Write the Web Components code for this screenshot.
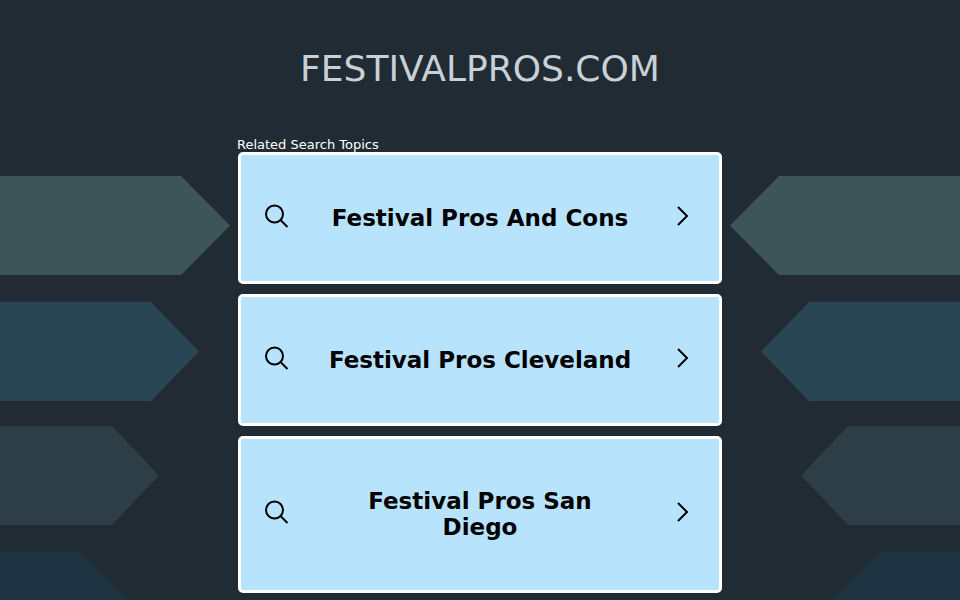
<!DOCTYPE html>
<html>
<head>
<meta charset="utf-8">
<title>festivalpros.com</title>
<style>
    html, body {
        margin: 0;
        height: 100%;
        overflow: hidden;
        background-color: #202b34;
        font-family: "DejaVu Sans", sans-serif;
    }
</style>
</head>
<body>
<arrow-backdrop></arrow-backdrop>
<parked-page domain="FESTIVALPROS.COM" heading="Related Search Topics">
    <search-link>Festival Pros And Cons</search-link>
    <search-link>Festival Pros Cleveland</search-link>
    <search-link>Festival Pros San Diego</search-link>
</parked-page>

<script>
class ArrowBackdrop extends HTMLElement {
    constructor() {
        super();
        this.attachShadow({ mode: 'open' });
    }

    connectedCallback() {
        this.shadowRoot.innerHTML = `
            <style>
                :host {
                    display: block;
                    position: absolute;
                    left: 0;
                    top: 0;
                    width: 960px;
                    height: 600px;
                    overflow: hidden;
                }
                svg {
                    display: block;
                }
            </style>
            <svg width="960" height="600" viewBox="0 0 960 600">
                <path fill="#3e5558" d="M0 176H181L230 225.500L181 275H0Z"/>
                <path fill="#2a4554" d="M0 302H151L199 351.500L151 401H0Z"/>
                <path fill="#2d3e46" d="M0 426H112L159 475.500L112 525H0Z"/>
                <path fill="#1f3442" d="M0 552H80L128 601V651H0Z"/>
                <path fill="#3e5558" d="M960 176H779L730 225.500L779 275H960Z"/>
                <path fill="#2a4554" d="M960 302H809L761 351.500L809 401H960Z"/>
                <path fill="#2d3e46" d="M960 426H848L801 475.500L848 525H960Z"/>
                <path fill="#1f3442" d="M960 552H880L832 601V651H960Z"/>
            </svg>
        `;
    }
}

class ParkedPage extends HTMLElement {
    constructor() {
        super();
        this.attachShadow({ mode: 'open' });
    }

    connectedCallback() {
        const domain = this.getAttribute('domain');
        const heading = this.getAttribute('heading');
        this.shadowRoot.innerHTML = `
            <style>
                :host {
                    display: block;
                    position: relative;
                    width: 960px;
                    height: 600px;
                    overflow: hidden;
                }
                h1 {
                    margin: 0;
                    padding-top: 47px;
                    height: 90px;
                    font-size: 36px;
                    line-height: 43px;
                    font-weight: 400;
                    text-align: center;
                    color: #c9d0d6;
                }
                .topics {
                    width: 486px;
                    margin: 0 auto;
                    box-sizing: border-box;
                }
                h2 {
                    margin: 0;
                    font-size: 13px;
                    line-height: 15px;
                    font-weight: 400;
                    color: #ffffff;
                }
                .list {
                    display: flex;
                    flex-direction: column;
                    gap: 10px;
                    width: 484px;
                    margin-left: 1px;
                }
            </style>
            <h1>${domain}</h1>
            <div class="topics">
                <h2>${heading}</h2>
                <div class="list"><slot></slot></div>
            </div>
        `;
    }
}

class SearchLink extends HTMLElement {
    constructor() {
        super();
        this.attachShadow({ mode: 'open' });
    }

    connectedCallback() {
        this.shadowRoot.innerHTML = `
            <style>
                :host {
                    display: block;
                }
                a {
                    display: grid;
                    box-sizing: border-box;
                    min-height: 132px;
                    grid-template-columns: 24px 304px 24px;
                    justify-content: space-between;
                    align-items: center;
                    padding: 49.200px 23px 49.800px;
                    border: 3px solid #ffffff;
                    border-radius: 5px;
                    background-color: #b8e3fc;
                    color: #000000;
                    text-decoration: none;
                    font-size: 23px;
                    line-height: 26px;
                    font-weight: 700;
                    text-align: center;
                }
                svg {
                    display: block;
                    position: relative;
                    top: -2.100px;
                }
            </style>
            <a href="#">
                <svg width="26" height="24" viewBox="0 0 26 24" fill="none" stroke="#000" stroke-width="2">
                    <circle cx="10.500" cy="10" r="8.500"/>
                    <path d="M16.500 16L23.500 23"/>
                </svg>
                <span><slot></slot></span>
                <svg width="24" height="24" viewBox="0 0 24 24" fill="none" stroke="#000" stroke-width="2">
                    <path d="M6 3L15 12L6 21"/>
                </svg>
            </a>
        `;
    }
}

customElements.define('arrow-backdrop', ArrowBackdrop);
customElements.define('parked-page', ParkedPage);
customElements.define('search-link', SearchLink);
</script>
</body>
</html>
